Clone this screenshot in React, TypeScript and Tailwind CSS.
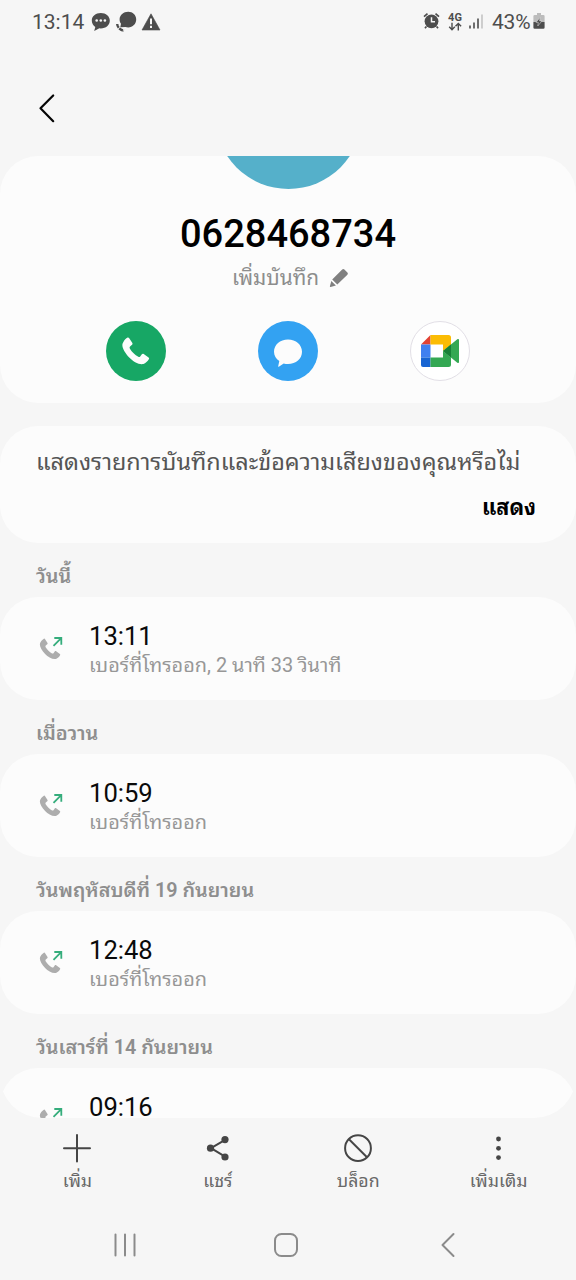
import type { ReactNode } from 'react';

const HANDSET =
  'M1.2 4.2 C2 2.6 3.400 1.200 4.800 .4 C5.400 .2 5.900 .5 6.200 1 L8.900 5.200 C9.200 5.800 9.100 6.300 8.600 6.700 L6.900 8.200 C6.400 8.700 6.400 9.300 6.800 10 C8.600 12.800 11 15.400 14 17 C14.600 17.300 15.200 17.200 15.600 16.700 L17 14.700 C17.400 14.200 18 14.100 18.600 14.500 L22.800 17.600 C23.300 18 23.400 18.600 23 19.100 C22 20.800 20.200 22.600 18.400 23.200 C14.500 24 9.500 21.200 6.200 17.600 C2.800 14 .2 9.600 .3 6.600 C.4 5.600 .7 4.900 1.200 4.200 Z';

function StatusBar() {
  return (
    <header className="flex h-[43px] items-center justify-between pr-[31px] pl-[32px] text-[#4d4d4d]">
      <div className="flex items-center">
        <span className="w-[60px] pt-px text-[21px] leading-[42px]">13:14</span>
        <svg width="20" height="22" viewBox="0 0 20 22" className="-ml-px">
          <path d="M9.800 2C4.600 2 .8 5.200.8 9.700c0 2.600 1.400 4.800 3.500 6.200L3.200 20l5.200-2.700 1.400.1c5.200 0 9-3.300 9-7.700S15 2 9.800 2Z" fill="#4d4d4d" />
          <circle cx="5.700" cy="9.500" r="1.300" fill="#f6f6f6" />
          <circle cx="9.800" cy="9.500" r="1.300" fill="#f6f6f6" />
          <circle cx="13.900" cy="9.500" r="1.300" fill="#f6f6f6" />
        </svg>
        <svg width="22" height="22" viewBox="0 0 22 22" className="ml-[5px]">
          <path d="M12.200.8C16.800.8 20.200 4.100 20.200 8.500S16.800 16.400 12.200 16.400c-1 0-2-.1-2.900-.4L4.300 16.200 5 12.700C4 11.600 3.600 10.200 3.600 8.500 3.600 4.100 7.600.8 12.200.8Z" fill="#4d4d4d" />
          <path d="M1.200 13c.2 3.400 3 6.200 6.800 6.700" stroke="#4d4d4d" strokeWidth="2.400" strokeDasharray="4.200 .8" fill="none" />
        </svg>
        <svg width="20" height="18" viewBox="0 0 20 18" className="ml-[3px]">
          <path d="M10 .8 19 17H1Z" fill="#4d4d4d" stroke="#4d4d4d" strokeWidth=".6" strokeLinejoin="round" />
          <path d="M10 5.500V11.300M10 12.700V15" stroke="#f6f6f6" strokeWidth="2" />
        </svg>
      </div>
      <div className="flex items-center">
        <svg width="17" height="18" viewBox="0 0 17 18" className="-mt-[2px] -ml-[2px]">
          <circle cx="8.500" cy="9.300" r="6.900" fill="#4d4d4d" />
          <path d="M1 4.700 4.500 1.700M16 4.700 12.500 1.700M3.400 14.500 2 16.300M13.600 14.500 15 16.300" stroke="#4d4d4d" strokeWidth="1.700" />
          <path d="M8.500 5.300V9.700H12" stroke="#f6f6f6" strokeWidth="1.500" fill="none" />
        </svg>
        <div className="ml-[8px] flex w-[14px] flex-col items-center">
          <span className="text-[11px] leading-[9px] font-bold">4G</span>
          <svg width="14" height="9" viewBox="0 0 14 9">
            <path d="M4 .8V7.500M1.200 4.800 4 7.700 6.800 4.800M10.300 8.400V1.500M7.500 4.300 10.300 1.400 13.100 4.300" stroke="#4d4d4d" strokeWidth="1.400" fill="none" />
          </svg>
        </div>
        <svg width="16" height="18" viewBox="0 0 16 18" className="ml-[6px]">
          <path d="M2 12.500V15.500M6 9.500V15.500M10 5.500V15.500" stroke="#4d4d4d" strokeWidth="1.600" />
          <path d="M14 1.500V15.500" stroke="#c4c4c4" strokeWidth="1.600" />
        </svg>
        <span className="ml-[8px] w-[41px] pt-px text-[21px] leading-[42px] tracking-[-0.200px] whitespace-nowrap">43%</span>
        <svg width="12" height="18" viewBox="0 0 12 18" className="-mt-px">
          <path d="M4 1h4v2h2.300a1.300 1.300 0 0 1 1.300 1.300V10H.4V4.300A1.300 1.300 0 0 1 1.700 3H4Z" fill="#bcbcbc" />
          <path d="M.4 10H11.600V15.500A1.300 1.300 0 0 1 10.300 16.800H1.700A1.300 1.300 0 0 1 .4 15.500Z" fill="#4d4d4d" />
          <path d="M7 5.500 3 10.400H5.300L4.800 14 9 8.900H6.600Z" fill="#4d4d4d" stroke="#d6d6d6" strokeWidth=".6" />
        </svg>
      </div>
    </header>
  );
}

function ProfileCard() {
  return (
    <section className="flex h-[247px] flex-col items-center overflow-hidden rounded-[38px] bg-[#fcfcfc]">
      <div className="flex h-[33px] items-end">
        <div className="size-[147px] shrink-0 rounded-full bg-[#55b0ca]" />
      </div>
      <h1 className="mt-[21px] h-[48px] text-[38px] leading-[48px] font-medium text-black">0628468734</h1>
      <div className="mt-[5px] flex h-[30px] items-center pl-[5px]">
        <span className="text-[20.800px] leading-[30px] text-[#8d8d8d]">เพิ่มบันทึก</span>
        <svg width="20" height="20" viewBox="0 0 20 20" className="ml-[10px]">
          <path d="M13.200 1.600a1.600 1.600 0 0 1 2.200 0l3 2.900a1.600 1.600 0 0 1 0 2.200L8.300 16.600 3.200 11.600Z M2.300 12.900 6.900 17.600 1.600 18.900A.6.6 0 0 1 .9 18.200Z" fill="#808080" />
        </svg>
      </div>
      <div className="mt-[28px] flex w-full justify-between pr-[106px] pl-[106px]">
        <div className="flex size-[60px] items-center justify-center rounded-full bg-[#17a765]">
          <svg width="28" height="28" viewBox="0 0 24 24"><path d={HANDSET} fill="#fcfcfc" /></svg>
        </div>
        <div className="flex size-[60px] items-center justify-center rounded-full bg-[#33a2f2]">
          <svg width="30" height="30" viewBox="0 0 30 30" className="mt-[2px]">
            <path d="M15 2.500C23 2.500 29 7.700 29 14.800S23 27 15 27c-1.500 0-3-.2-4.300-.6L5.800 29.800C5.400 30 5.100 29.700 5.200 29.300L6.300 24C3 21.800 1 18.700 1 14.800 1 7.700 7 2.500 15 2.500Z" fill="#fcfcfc" />
          </svg>
        </div>
        <div className="flex size-[60px] items-center justify-center rounded-full border border-[#e2dfe6] bg-white">
          <svg width="40" height="34" viewBox="0 0 40 34">
            <path d="M1 10.500 10.500 1V10.500Z" fill="#e24335" />
            <path d="M1 10.500H10.500V23.500H1Z" fill="#4080f0" />
            <path d="M1 23.500H10.500V33H3A2 2 0 0 1 1 31Z" fill="#1764d2" />
            <path d="M10.500 1H28.500A2.500 2.500 0 0 1 31 3.500V11L23 17V10.500H10.500Z" fill="#fbbc04" />
            <path d="M10.500 23.500H23V17L31 23.500V30.500A2.500 2.500 0 0 1 28.500 33H10.500Z" fill="#34a853" />
            <path d="M23 17 37.300 5.300C38.300 4.600 39 5 39 6V28C39 29 38.300 29.400 37.300 28.700Z" fill="#34a853" />
            <path d="M23 17 31 10.500V23.500Z" fill="#188038" />
          </svg>
        </div>
      </div>
    </section>
  );
}

function DayLabel({ children }: { children: ReactNode }) {
  return <h2 className="h-[54px] shrink-0 pt-[19px] pl-[36px] text-[19.800px] leading-[30px] font-semibold text-[#8e8e8e]">{children}</h2>;
}

function CallRow({ time, detail }: { time: string; detail?: string }) {
  return (
    <div className="flex h-[103px] shrink-0 rounded-[38px] bg-[#fcfcfc] pl-[38px]">
      <svg width="26" height="26" viewBox="0 0 26 26" className="mt-[38px]">
        <g transform="translate(1.600 3.300) scale(.89)"><path d={HANDSET} fill="#adadad" /></g>
        <path d="M15.500 10.800 22.900 3.400M16.300 3H23.300V9.800" stroke="#35ad7c" strokeWidth="1.800" fill="none" />
      </svg>
      <div className="flex flex-col pt-[24px] pl-[25px] whitespace-nowrap">
        <span className="h-[30px] text-[25.600px] leading-[30px] text-[#0a0a0a]">{time}</span>
        {detail && <span className="h-[30px] text-[19.900px] leading-[30px] text-[#979797]">{detail}</span>}
      </div>
    </div>
  );
}

function Action({ label, children }: { label: string; children: ReactNode }) {
  return (
    <button className="flex w-[140.400px] flex-col items-center">
      <svg width="30" height="30" viewBox="0 0 30 30" fill="none" stroke="#454545" strokeWidth="2">{children}</svg>
      <span className="mt-[3px] h-[30px] text-[17.700px] leading-[30px] text-[#686868]">{label}</span>
    </button>
  );
}

export default function App() {
  return (
    <div className="flex h-[1280px] w-[576px] flex-col overflow-hidden bg-[#f6f6f6] font-[Roboto,'Noto_Sans_Thai_Looped','Noto_Sans_Thai','Noto_Sans',sans-serif]">
      <StatusBar />
      <div className="h-[113px] pt-[50px] pl-[36px]">
        <svg width="20" height="30" viewBox="0 0 20 30">
          <path d="M17.200 2.500 4.500 15.300 17.200 28.200" fill="none" stroke="#050505" strokeWidth="2.200" strokeLinecap="round" strokeLinejoin="round" />
        </svg>
      </div>
      <main className="flex h-[962px] shrink-0 flex-col overflow-hidden">
        <ProfileCard />
        <section className="mt-[23px] flex h-[117px] shrink-0 flex-col rounded-[38px] bg-[#fcfcfc] pt-[21px] pr-[40px] pl-[36px]">
          <p className="h-[30px] text-[23.400px] leading-[30px] whitespace-nowrap text-[#555]">แสดงรายการบันทึกและข้อความเสียงของคุณหรือไม่</p>
          <button className="mt-[16px] h-[30px] self-end text-[21.600px] leading-[30px] font-bold text-black">แสดง</button>
        </section>
        <DayLabel>วันนี้</DayLabel>
        <CallRow time="13:11" detail="เบอร์ที่โทรออก, 2 นาที 33 วินาที" />
        <DayLabel>เมื่อวาน</DayLabel>
        <CallRow time="10:59" detail="เบอร์ที่โทรออก" />
        <DayLabel>วันพฤหัสบดีที่ 19 กันยายน</DayLabel>
        <CallRow time="12:48" detail="เบอร์ที่โทรออก" />
        <DayLabel>วันเสาร์ที่ 14 กันยายน</DayLabel>
        <div className="h-[50px] shrink-0 overflow-hidden rounded-b-[42px]">
          <CallRow time="09:16" />
        </div>
      </main>
      <div className="flex h-[92px] justify-center pt-[15px]">
        <Action label="เพิ่ม"><path d="M15 2V28.500M2 15.200H28" strokeLinecap="round" /></Action>
        <Action label="แชร์">
          <path d="M8 15.200 22.500 6.700M8 15.200 22.500 23.800" />
          <g fill="#454545" stroke="none"><circle cx="7.500" cy="15.200" r="3.600" /><circle cx="22" cy="6.600" r="3.600" /><circle cx="22" cy="24" r="3.600" /></g>
        </Action>
        <Action label="บล็อก"><circle cx="15" cy="15.200" r="12.900" /><path d="M6 6.200 24 24.200" /></Action>
        <Action label="เพิ่มเติม">
          <g fill="#454545" stroke="none"><circle cx="14.500" cy="6" r="2.400" /><circle cx="14.500" cy="15.300" r="2.400" /><circle cx="14.500" cy="24.600" r="2.400" /></g>
        </Action>
      </div>
      <nav className="flex h-[70px] items-center justify-between pr-[119px] pl-[113px]">
        <svg width="24" height="26" viewBox="0 0 24 26"><path d="M2.500 2.500V23.500M12 2.500V23.500M21.500 2.500V23.500" stroke="#8b8b8b" strokeWidth="2" strokeLinecap="round" /></svg>
        <svg width="26" height="26" viewBox="0 0 26 26" className="mr-[4px]"><rect x="2" y="2" width="22" height="22" rx="6.500" fill="none" stroke="#8b8b8b" strokeWidth="2" /></svg>
        <svg width="18" height="26" viewBox="0 0 18 26"><path d="M14.500 2 3.500 13 14.500 24" fill="none" stroke="#8b8b8b" strokeWidth="2" strokeLinecap="round" strokeLinejoin="round" /></svg>
      </nav>
    </div>
  );
}
